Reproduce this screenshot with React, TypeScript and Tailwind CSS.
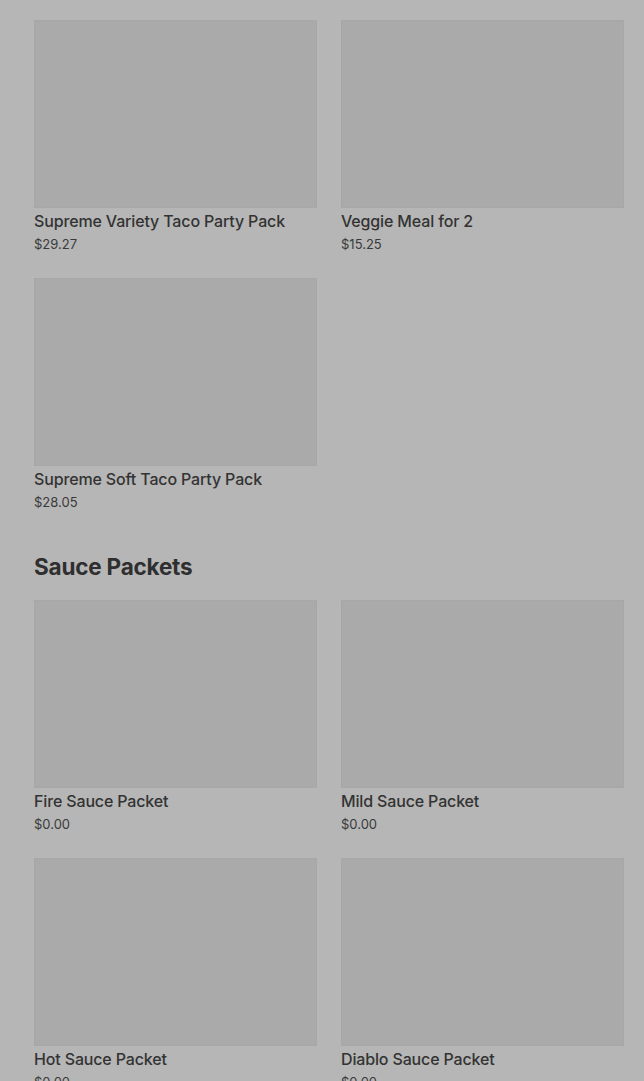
import React from "react";

type Item = { name: string; price: string };

const Card = ({ item }: { item: Item }) => (
  <div className="flex flex-col">
    <div className="h-[188px] w-full bg-[#aaaaaa] border border-[#a7a7a7]" />
    <div className="mt-[3px] text-[16px] leading-[20px] font-medium text-[#333333] tracking-[-0.15px]">
      {item.name}
    </div>
    <div className="mt-[5px] text-[13px] leading-[16px] text-[#3a3a3a]">{item.price}</div>
  </div>
);

export default function App() {
  const group1: Item[] = [
    { name: "Supreme Variety Taco Party Pack", price: "$29.27" },
    { name: "Veggie Meal for 2", price: "$15.25" },
    { name: "Supreme Soft Taco Party Pack", price: "$28.05" },
  ];
  const group2: Item[] = [
    { name: "Fire Sauce Packet", price: "$0.00" },
    { name: "Mild Sauce Packet", price: "$0.00" },
    { name: "Hot Sauce Packet", price: "$0.00" },
    { name: "Diablo Sauce Packet", price: "$0.00" },
  ];
  return (
    <div
      className="min-h-[1081px] h-[1081px] overflow-hidden bg-[#b6b6b6] pl-[34px] pr-[20px] pt-[20px]"
      style={{ fontFamily: "Inter, 'Noto Sans', sans-serif" }}
    >
      <div className="grid grid-cols-2 gap-x-[24px] gap-y-[26px]">
        {group1.map((i) => (
          <Card key={i.name} item={i} />
        ))}
      </div>
      <h2 className="mt-[43px] mb-[19px] text-[22.5px] leading-[28px] font-bold text-[#2f2f2f] tracking-[-0.2px]">
        Sauce Packets
      </h2>
      <div className="grid grid-cols-2 gap-x-[24px] gap-y-[26px]">
        {group2.map((i) => (
          <Card key={i.name} item={i} />
        ))}
      </div>
    </div>
  );
}
